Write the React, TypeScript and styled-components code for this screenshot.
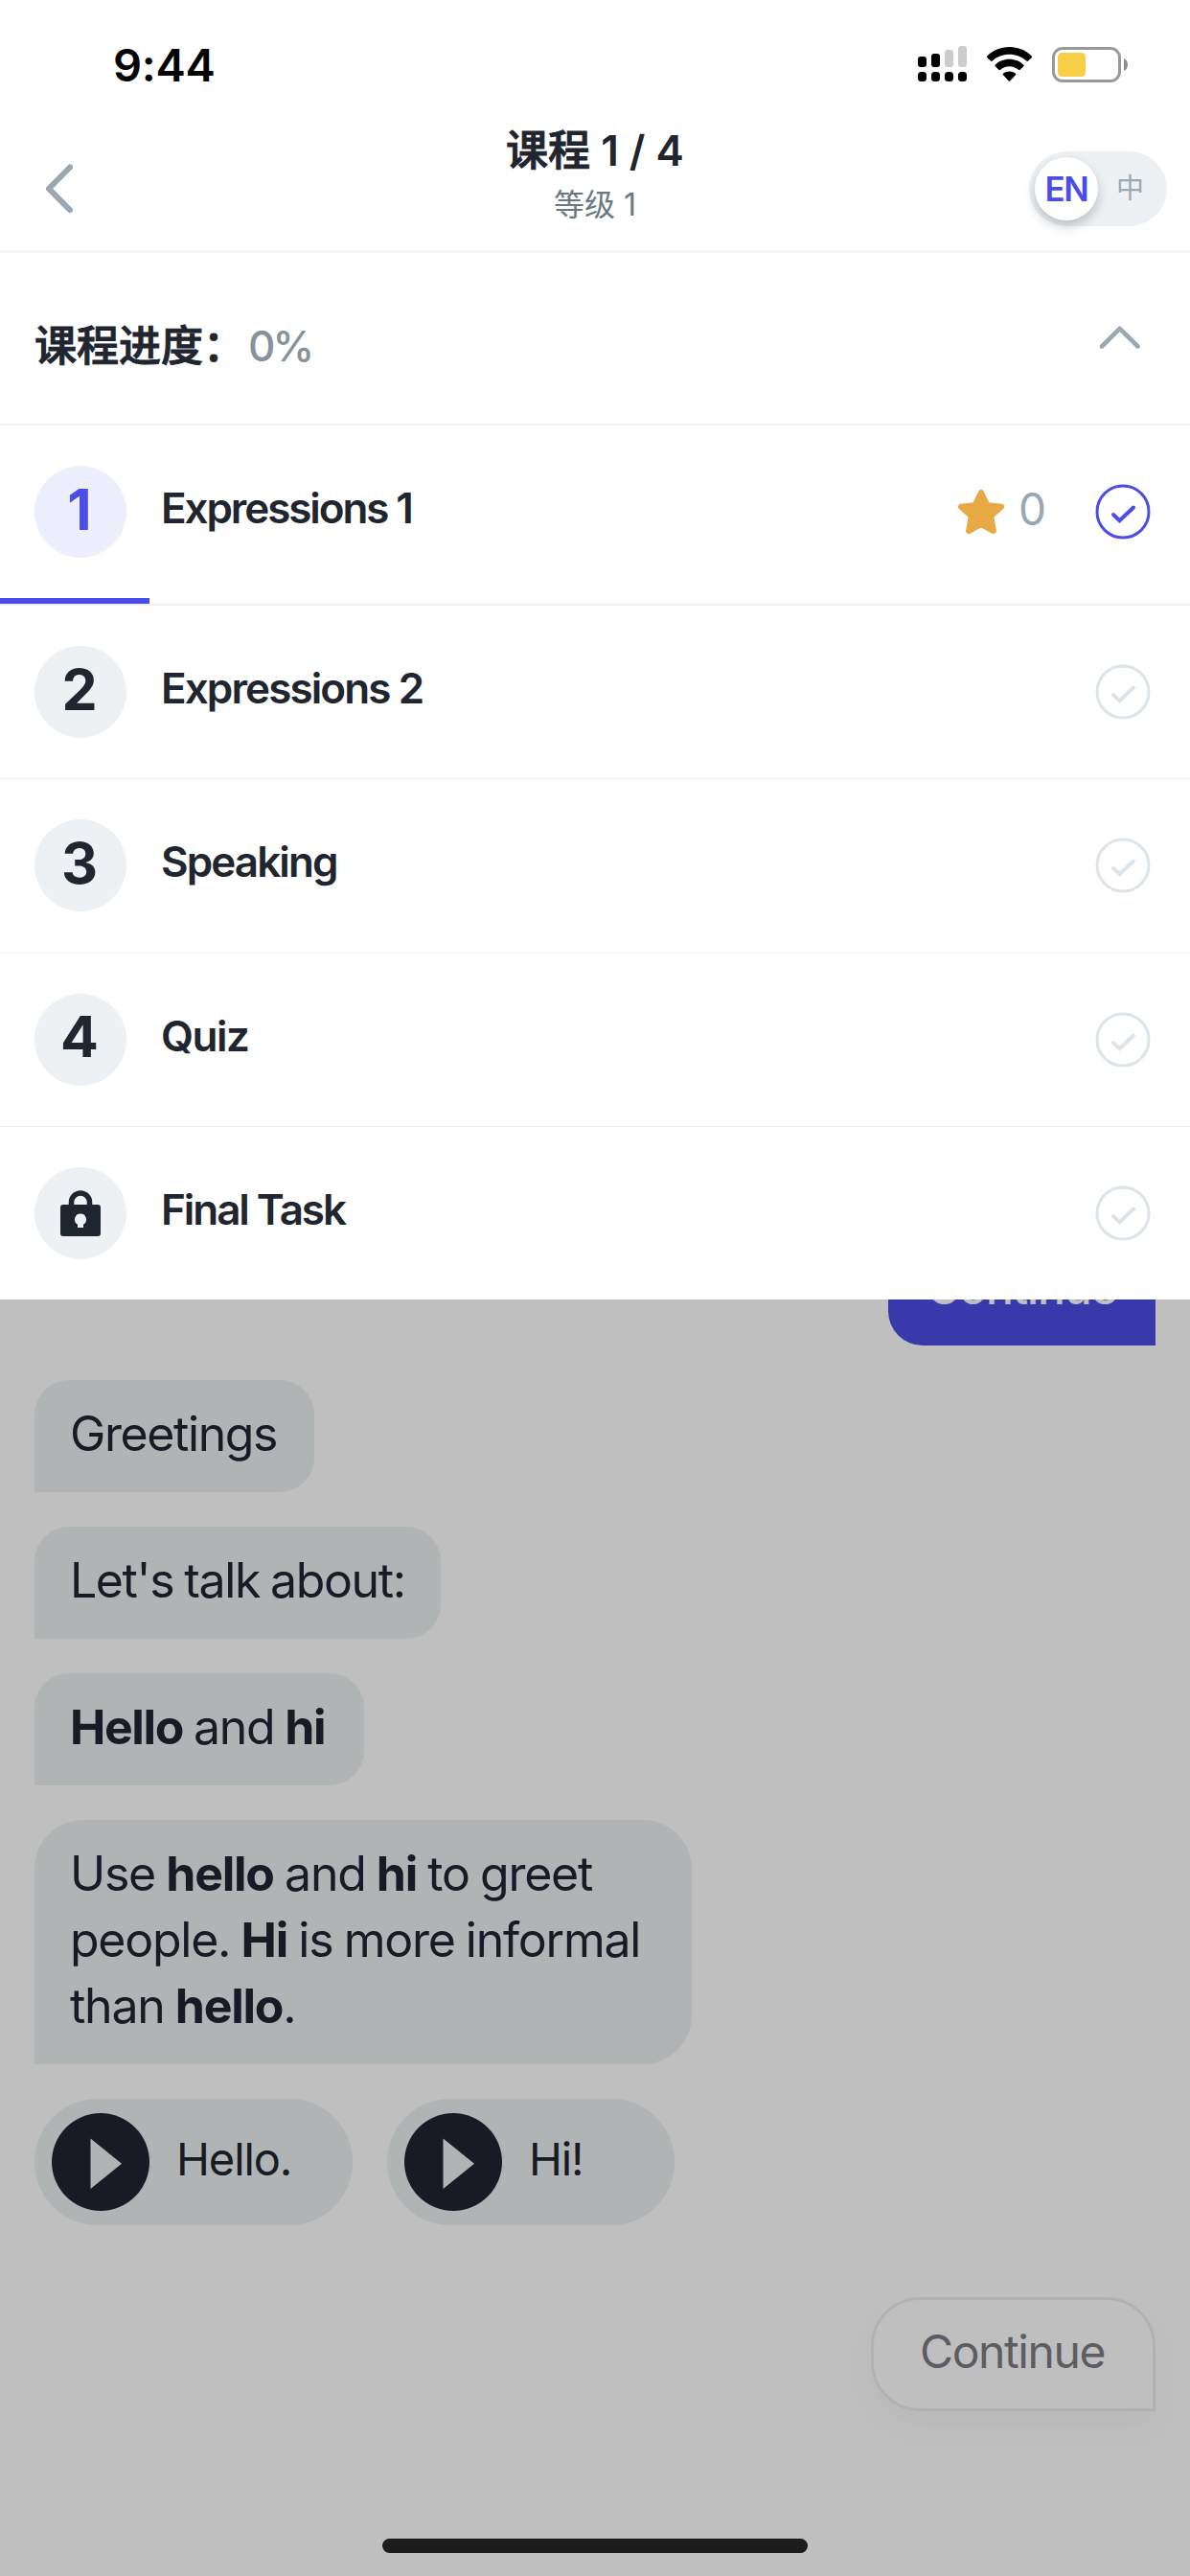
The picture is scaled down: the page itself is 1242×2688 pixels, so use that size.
import React from "react";
import styled, { createGlobalStyle } from "styled-components";

const GlobalStyle = createGlobalStyle`
  *, *::before, *::after { box-sizing: border-box; }
  body {
    margin: 0;
    background: #fff;
    font-family: Inter, "Noto Sans CJK SC", sans-serif;
    color: #1f2630;
  }
  svg { display: block; }
`;

const Screen = styled.div`
  width: 1242px;
  height: 2688px;
  display: flex;
  flex-direction: column;
  overflow: hidden;
  position: relative;
  background: #fff;
`;

const StatusBar = styled.div`
  height: 132px;
  flex: none;
  display: flex;
  justify-content: space-between;
  align-items: flex-start;
  padding: 48px 64px 0 118px;
`;

const Clock = styled.div`
  font-size: 47px;
  line-height: 40px;
  font-weight: 600;
  letter-spacing: -0.3px;
  color: #000;
`;

const StatusIcons = styled.div`
  display: flex;
  gap: 21px;
`;

const NavBar = styled.header`
  height: 132px;
  flex: none;
  display: grid;
  grid-template-columns: 300px 1fr 300px;
  border-bottom: 3px solid #f5f5f5;
`;

const BackButton = styled.div`
  padding: 38px 0 0 46px;
`;

const Heading = styled.div`
  display: flex;
  flex-direction: column;
  align-items: center;
`;

const Title = styled.h1`
  margin: 0;
  font-size: 44px;
  line-height: 50px;
  font-weight: 600;
`;

const Chinese = styled.span`
  font-weight: 500;
  -webkit-text-stroke: 1px currentColor;
`;

const Subtitle = styled.div`
  font-size: 32px;
  line-height: 40px;
  margin-top: 12px;
  color: #6c7881;
`;

const ToggleSlot = styled.div`
  display: flex;
  justify-content: flex-end;
  padding: 26px 24px 0 0;
`;

const Toggle = styled.div`
  width: 144px;
  height: 78px;
  border-radius: 39px;
  padding: 6px;
  display: flex;
  align-items: center;
  background: #edf1f4;
`;

const ToggleKnob = styled.div`
  width: 66px;
  height: 66px;
  border-radius: 50%;
  display: flex;
  align-items: center;
  justify-content: center;
  background: #fff;
  box-shadow: 0 6px 12px rgba(31, 38, 48, 0.24);
  color: #4c4de8;
  font-size: 35px;
  font-weight: 600;
  letter-spacing: -1.5px;
`;

const ToggleOther = styled.div`
  flex: 1;
  text-align: center;
  font-size: 29px;
  line-height: 40px;
  padding-left: 1px;
  color: #9ba8b1;
`;

const ProgressHeader = styled.div`
  height: 180px;
  flex: none;
  display: flex;
  justify-content: space-between;
  align-items: flex-start;
  padding: 72px 50px 0 36px;
  border-bottom: 2px solid #edf1f4;
`;

const ProgressLabel = styled.div`
  font-size: 44px;
  line-height: 50px;
`;

const ProgressValue = styled.span`
  margin-left: 3px;
  color: #86929a;
  font-weight: 500;
  letter-spacing: -3px;
`;

const ChevronSlot = styled.div`
  padding-top: 2px;
`;

const Lesson = styled.div<{ $current?: boolean; $last?: boolean }>`
  height: ${(p) => (p.$current ? "188px" : p.$last ? "180px" : "181.33px")};
  flex: none;
  display: flex;
  flex-direction: column;
  border-bottom: ${(p) => (p.$last ? "0" : p.$current ? "2px" : "1.33px")} solid #edf1f4;
`;

const LessonBody = styled.div`
  height: 180px;
  flex: none;
  display: flex;
  align-items: center;
  padding: 0 40px 0 36px;
`;

const LessonProgress = styled.div`
  width: 156px;
  height: 6px;
  background: #4c4de8;
`;

const Badge = styled.div<{ $current?: boolean }>`
  width: 96px;
  height: 96px;
  border-radius: 50%;
  display: flex;
  align-items: center;
  justify-content: center;
  background: ${(p) => (p.$current ? "#eeeffc" : "#edf1f4")};
  color: ${(p) => (p.$current ? "#4c4de8" : "#1f2630")};
`;

const BadgeNumber = styled.span`
  font-size: 59px;
  line-height: 60px;
  font-weight: 700;
  padding: 0 2px 5px 0;
`;

const LessonName = styled.div<{ $tracking: number }>`
  flex: 1;
  padding: 0 0 8px 36px;
  font-size: 44px;
  line-height: 50px;
  font-weight: 600;
  letter-spacing: ${(p) => p.$tracking}px;
`;

const Score = styled.div`
  display: flex;
  align-items: center;
  gap: 14px;
  margin-right: 50px;
`;

const ScoreValue = styled.span`
  font-size: 46px;
  line-height: 50px;
  padding-bottom: 6px;
  color: #9ba8b1;
`;

const Chat = styled.main`
  flex: 1;
  min-height: 0;
  position: relative;
  overflow: hidden;
  display: flex;
  flex-direction: column;
  justify-content: flex-end;
  align-items: flex-start;
  gap: 36px;
  padding: 0 36px 172px;
  background: #fff;
`;

const Dim = styled.div`
  position: absolute;
  inset: 0;
  background: rgba(0, 0, 0, 0.25);
`;

const Bubble = styled.div<{ $width: number; $large?: boolean }>`
  width: ${(p) => p.$width}px;
  flex: none;
  padding: 22px 0 26px 37px;
  border-radius: ${(p) => (p.$large ? "51px 51px 51px 0" : "36px 36px 36px 0")};
  background: #ecf1f2;
  color: #202430;
  font-size: 50px;
  line-height: 69px;
  white-space: nowrap;
  letter-spacing: ${(p) => (p.$large ? -1.25 : -1.4)}px;
  word-spacing: -1.5px;
`;

const Strong = styled.b`
  font-weight: 700;
`;

const Reply = styled.div`
  width: 279px;
  height: 117px;
  flex: none;
  align-self: flex-end;
  padding: 22px 0 0 40px;
  border-radius: 36px 36px 0 36px;
  background: #4c4de6;
  color: #fff;
  font-size: 48px;
  line-height: 69px;
  font-weight: 500;
  letter-spacing: -1.1px;
`;

const Clips = styled.div`
  display: flex;
  gap: 36px;
  flex: none;
`;

const Clip = styled.div<{ $width: number }>`
  width: ${(p) => p.$width}px;
  height: 132px;
  border-radius: 66px;
  display: flex;
  align-items: center;
  gap: 28px;
  padding-left: 18px;
  background: #ecf1f2;
  color: #202430;
`;

const ClipText = styled.span`
  font-size: 47px;
  line-height: 60px;
  padding-bottom: 6px;
  letter-spacing: -1.1px;
`;

const ContinueButton = styled.div`
  width: 297px;
  height: 119px;
  flex: none;
  align-self: flex-end;
  margin-top: 39px;
  border: 3px solid #e9eef2;
  border-radius: 51px 51px 0 51px;
  padding: 19px 0 0 48px;
  background: #fff;
  box-shadow: 0 15px 30px rgba(31, 38, 48, 0.04);
  color: #7b7c84;
  font-size: 48px;
  line-height: 69px;
  letter-spacing: -1.4px;
`;

const HomeIndicator = styled.div`
  position: absolute;
  left: 399px;
  bottom: 24px;
  width: 444px;
  height: 15px;
  border-radius: 8px;
  background: #1c1c1c;
`;

const SignalIcon = () => (
  <svg width="51" height="38" viewBox="0 0 51 38">
    <rect x="0" y="11" width="9" height="11" rx="3" />
    <rect x="14" y="8" width="9" height="14" rx="3" />
    <rect x="28" y="4" width="9" height="18" rx="3" fill="#ccc" />
    <rect x="42" y="0" width="9" height="22" rx="3" fill="#ccc" />
    {[0, 14, 28, 42].map((x) => (
      <rect key={x} x={x} y="27" width="9" height="10" rx="3.5" />
    ))}
  </svg>
);

const WifiIcon = () => (
  <svg width="47" height="38" viewBox="0 0 47 38">
    <path d="M23.5 1C32.5 1 41 4.600 46.500 10.300C47.200 11 47.200 11.600 46.600 12.200L43.100 15.600C42.500 16.200 41.900 16.100 41.300 15.500C36.600 11.200 30.200 8.800 23.500 8.800S10.400 11.200 5.700 15.500C5.100 16.100 4.500 16.200 3.900 15.600L.4 12.200C-.2 11.600-.2 11 .5 10.300C6 4.600 14.500 1 23.500 1Z" />
    <path d="M23.500 13.800C29.200 13.800 34.500 16 38.200 19.500C38.800 20.100 38.800 20.700 38.200 21.300L34.700 24.700C34.100 25.300 33.500 25.200 32.900 24.700C30.300 22.600 27 21.300 23.500 21.300S16.700 22.600 14.100 24.700C13.500 25.200 12.900 25.300 12.300 24.700L8.800 21.300C8.200 20.700 8.200 20.100 8.800 19.500C12.500 16 17.800 13.800 23.500 13.800Z" />
    <path d="M23.500 26.400C25.900 26.400 28.100 27.200 29.800 28.600C30.500 29.200 30.500 29.700 29.900 30.300L24.400 36.200C23.800 36.800 23.200 36.800 22.600 36.200L17.100 30.300C16.500 29.700 16.500 29.200 17.200 28.600C18.900 27.200 21.100 26.400 23.500 26.400Z" />
  </svg>
);

const BatteryIcon = () => (
  <svg width="80" height="38" viewBox="0 0 80 38">
    <rect x="1.500" y="2.500" width="69" height="34" rx="9.500" fill="none" stroke="#999" strokeWidth="3" />
    <rect x="6" y="7" width="29" height="25" rx="4.500" fill="#f7ce46" />
    <path d="M75 13C77.600 14.200 79 16.600 79 19.500S77.600 24.800 75 26Z" fill="#8c8c8c" />
  </svg>
);

const BackIcon = () => (
  <svg width="32" height="54" viewBox="0 0 32 54" fill="none" stroke="#9ba8b1" strokeWidth="6" strokeLinecap="round" strokeLinejoin="round">
    <path d="M27 4.500 5 26.800 27 49.200" />
  </svg>
);

const CollapseIcon = () => (
  <svg width="46" height="28" viewBox="0 0 46 28" fill="none" stroke="#9ba8b1" strokeWidth="4.600" strokeLinecap="round" strokeLinejoin="round">
    <path d="M4 23.500 22.700 4.800 41.600 23.500" />
  </svg>
);

const StarIcon = () => (
  <svg width="50" height="50" viewBox="0 0 50 50" fill="#e8a945" stroke="#e8a945" strokeWidth="6" strokeLinejoin="round">
    <path d="M25 5 31.400 18.200 46 19.700 35.200 29.500 37.900 45 25 38 12.100 45 14.800 29.500 4 19.700 18.600 18.200Z" />
  </svg>
);

const CheckIcon = ({ color }: { color: string }) => (
  <svg width="60" height="60" viewBox="0 0 60 60" fill="none" stroke={color}>
    <circle cx="30" cy="30" r="27" strokeWidth="3" />
    <path d="M20 33 26.500 39.300 41 25.500" strokeWidth="4" strokeLinecap="round" />
  </svg>
);

const LockIcon = () => (
  <svg width="42" height="48" viewBox="0 0 42 48">
    <path d="M11.500 17V12.500a9.500 9.500 0 0 1 19 0V17" fill="none" stroke="#1f2630" strokeWidth="5.500" />
    <path
      fill="#1f2630"
      fillRule="evenodd"
      d="M3 15H39a3 3 0 0 1 3 3V45a3 3 0 0 1-3 3H3a3 3 0 0 1-3-3V18a3 3 0 0 1 3-3ZM21 24.500a6 6 0 0 0-3 11.200V39h6V35.700a6 6 0 0 0-3-11.200Z"
    />
  </svg>
);

const PlayIcon = () => (
  <svg width="102" height="102" viewBox="0 0 102 102">
    <circle cx="51" cy="51" r="51" fill="#202430" />
    <path d="M40.500 26.500V79L73 52.700Z" fill="#ecf1f2" />
  </svg>
);

const lessons = [
  { name: "Expressions 1", badge: "1", current: true, tracking: -2.1 },
  { name: "Expressions 2", badge: "2", tracking: -1.9 },
  { name: "Speaking", badge: "3", tracking: -1.9 },
  { name: "Quiz", badge: "4", tracking: -1.5 },
  { name: "Final Task", badge: null, tracking: -2.05 },
];

export default function App() {
  return (
    <Screen>
      <GlobalStyle />
      <StatusBar>
        <Clock>9:44</Clock>
        <StatusIcons>
          <SignalIcon />
          <WifiIcon />
          <BatteryIcon />
        </StatusIcons>
      </StatusBar>
      <NavBar>
        <BackButton>
          <BackIcon />
        </BackButton>
        <Heading>
          <Title>
            <Chinese>课程</Chinese> 1 / 4
          </Title>
          <Subtitle>等级 1</Subtitle>
        </Heading>
        <ToggleSlot>
          <Toggle>
            <ToggleKnob>EN</ToggleKnob>
            <ToggleOther>中</ToggleOther>
          </Toggle>
        </ToggleSlot>
      </NavBar>
      <ProgressHeader>
        <ProgressLabel>
          <Chinese>课程进度：</Chinese>
          <ProgressValue>0%</ProgressValue>
        </ProgressLabel>
        <ChevronSlot>
          <CollapseIcon />
        </ChevronSlot>
      </ProgressHeader>
      {lessons.map((lesson, i) => (
        <Lesson key={lesson.name} $current={lesson.current} $last={i === lessons.length - 1}>
          <LessonBody>
            <Badge $current={lesson.current}>
              {lesson.badge ? <BadgeNumber>{lesson.badge}</BadgeNumber> : <LockIcon />}
            </Badge>
            <LessonName $tracking={lesson.tracking}>{lesson.name}</LessonName>
            {lesson.current && (
              <Score>
                <StarIcon />
                <ScoreValue>0</ScoreValue>
              </Score>
            )}
            <CheckIcon color={lesson.current ? "#4c4de8" : "#dde4ea"} />
          </LessonBody>
          {lesson.current && <LessonProgress />}
        </Lesson>
      ))}
      <Chat>
        <Reply>Continue</Reply>
        <Bubble $width={292}>Greetings</Bubble>
        <Bubble $width={424}>Let's talk about:</Bubble>
        <Bubble $width={344}>
          <Strong>Hello</Strong> and <Strong>hi</Strong>
        </Bubble>
        <Bubble $width={686} $large>
          Use <Strong>hello</Strong> and <Strong>hi</Strong> to greet
          <br />
          people. <Strong>Hi</Strong> is more informal
          <br />
          than <Strong>hello</Strong>.
        </Bubble>
        <Clips>
          <Clip $width={332}>
            <PlayIcon />
            <ClipText>Hello.</ClipText>
          </Clip>
          <Clip $width={300}>
            <PlayIcon />
            <ClipText>Hi!</ClipText>
          </Clip>
        </Clips>
        <ContinueButton>Continue</ContinueButton>
        <Dim />
      </Chat>
      <HomeIndicator />
    </Screen>
  );
}
